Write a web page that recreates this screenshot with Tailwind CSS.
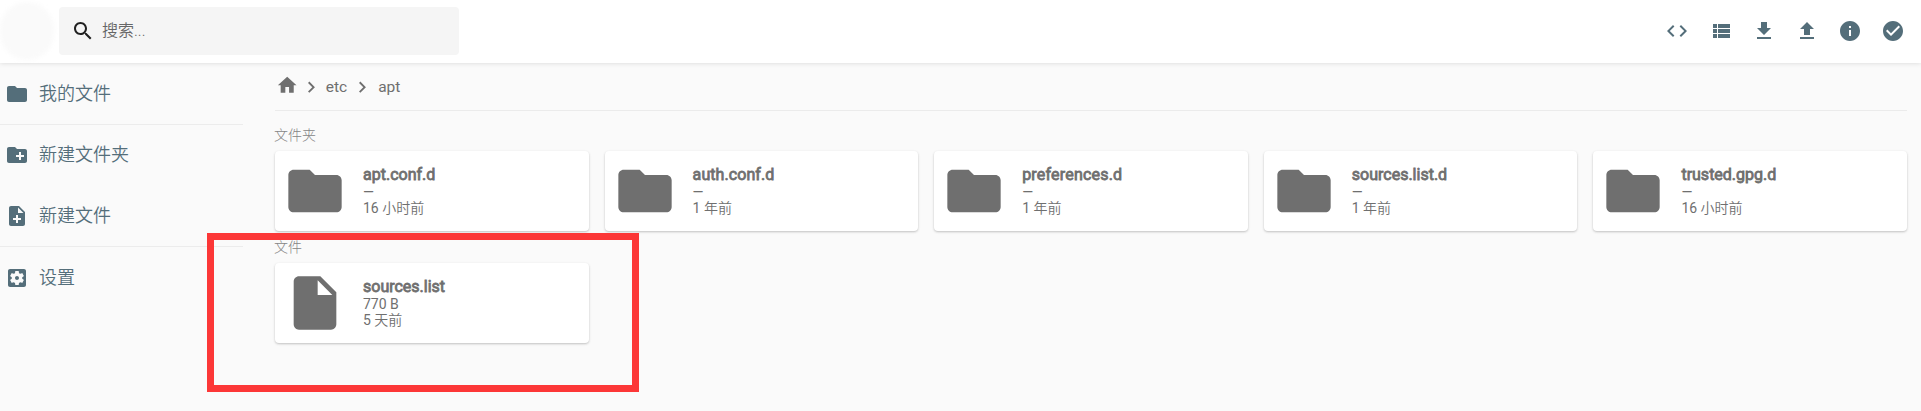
<!DOCTYPE html>
<html lang="zh-CN">
<head>
<meta charset="utf-8">
<title>apt</title>
<script src="https://cdn.jsdelivr.net/npm/@tailwindcss/browser@4"></script>
</head>
<body class="relative h-[411px] w-[1921px] overflow-hidden bg-[#fafafa] font-[Roboto,'Noto_Sans_CJK_SC',sans-serif] text-[#6f6f6f]">
<svg class="hidden">
  <symbol id="folder" viewBox="0 0 24 24"><path d="M10 4H4c-1.1 0-1.99.9-1.99 2L2 18c0 1.1.9 2 2 2h16c1.1 0 2-.9 2-2V8c0-1.1-.9-2-2-2h-8l-2-2z"/></symbol>
  <symbol id="file" viewBox="0 0 24 24"><path d="M6 2c-1.1 0-1.99.9-1.99 2L4 20c0 1.1.89 2 1.99 2H18c1.1 0 2-.9 2-2V8l-6-6H6zm7 7V3.500L18.500 9H13z"/></symbol>
  <symbol id="chevron" viewBox="0 0 24 24"><path d="M10 6L8.590 7.410 13.170 12l-4.580 4.590L10 18l6-6z"/></symbol>
</svg>

<header class="relative flex h-[63px] items-center bg-white pr-4 pb-px shadow-[0_0_5px_rgba(0,0,0,0.15)]">
  <div class="mr-[5px] h-[58px] w-[54px] rounded-full bg-[#fafafa] blur-[2px]"></div>
  <label class="flex h-12 w-[400px] items-center rounded bg-[#f5f5f5] pl-3">
    <svg class="size-6 fill-[#212121]" viewBox="0 0 24 24"><path d="M15.500 14h-.79l-.28-.27C15.410 12.590 16 11.110 16 9.500 16 5.910 13.090 3 9.500 3S3 5.910 3 9.500 5.910 16 9.500 16c1.610 0 3.090-.59 4.230-1.570l.27.28v.79l5 4.990L20.490 19l-4.990-5zm-6 0C7.010 14 5 11.990 5 9.500S7.010 5 9.500 5 14 7.010 14 9.500 11.990 14 9.500 14z"/></svg>
    <span class="ml-[7px] text-base font-[350] text-[#666]">搜索...</span>
  </label>
  <nav class="ml-auto flex gap-[19px] fill-[#546e7a]">
    <svg class="mr-px size-6" viewBox="0 0 24 24"><path d="M9.400 16.600L4.800 12l4.600-4.600L8 6l-6 6 6 6 1.400-1.400zm5.200 0l4.600-4.600-4.600-4.600L16 6l6 6-6 6-1.400-1.400z"/></svg>
    <svg class="size-6" viewBox="0 0 24 24"><path d="M4 14h4v-4H4v4zm0 5h4v-4H4v4zM4 9h4V5H4v4zm5 5h12v-4H9v4zm0 5h12v-4H9v4zM9 5v4h12V5H9z"/></svg>
    <svg class="size-6" viewBox="0 0 24 24"><path d="M19 9h-4V3H9v6H5l7 7 7-7zM5 18v2h14v-2H5z"/></svg>
    <svg class="size-6" viewBox="0 0 24 24"><path d="M9 16h6v-6h4l-7-7-7 7h4zm-4 2h14v2H5z"/></svg>
    <svg class="size-6" viewBox="0 0 24 24"><path d="M12 2C6.480 2 2 6.480 2 12s4.480 10 10 10 10-4.480 10-10S17.520 2 12 2zm1 15h-2v-6h2v6zm0-8h-2V7h2v2z"/></svg>
    <svg class="size-6" viewBox="0 0 24 24"><path d="M12 2C6.480 2 2 6.480 2 12s4.480 10 10 10 10-4.480 10-10S17.520 2 12 2zm-2 15l-5-5 1.410-1.410L10 14.170l7.590-7.590L19 8l-9 9z"/></svg>
  </nav>
</header>

<div class="flex">
  <aside class="w-[243px] shrink-0 fill-[#546e7a] text-lg font-[350] text-[#546e7a]">
    <div class="flex h-[61px] items-center gap-[10px] pl-[5px]"><svg class="size-6"><use href="#folder"/></svg><span>我的文件</span></div>
    <div class="border-y border-[#ececec]">
      <div class="flex h-[60px] items-center gap-[10px] pl-[5px]"><svg class="size-6" viewBox="0 0 24 24"><path d="M20 6h-8l-2-2H4c-1.110 0-1.990.89-1.990 2L2 18c0 1.110.89 2 2 2h16c1.110 0 2-.89 2-2V8c0-1.110-.89-2-2-2zm-1 8h-3v3h-2v-3h-3v-2h3V9h2v3h3v2z"/></svg><span>新建文件夹</span></div>
      <div class="flex h-[61px] items-center gap-[10px] pl-[5px]"><svg class="size-6" viewBox="0 0 24 24"><path d="M14 2H6c-1.100 0-1.990.9-1.990 2L4 20c0 1.100.89 2 1.990 2H18c1.100 0 2-.9 2-2V8l-6-6zm2 14h-3v3h-2v-3H8v-2h3v-3h2v3h3v2zm-3-7V3.500L18.500 9H13z"/></svg><span>新建文件</span></div>
    </div>
    <div class="flex h-[62px] items-center gap-[10px] pl-[5px]"><svg class="size-6" viewBox="0 0 24 24"><path d="M12 10c-1.100 0-2 .9-2 2s.9 2 2 2 2-.9 2-2-.9-2-2-2zm7-7H5c-1.110 0-2 .9-2 2v14c0 1.100.89 2 2 2h14c1.110 0 2-.9 2-2V5c0-1.100-.89-2-2-2zm-1.750 9c0 .23-.02.46-.05.68l1.480 1.160c.13.110.17.300.08.450l-1.400 2.420c-.09.150-.27.210-.43.150l-1.740-.7c-.36.280-.76.510-1.180.690l-.26 1.850c-.03.170-.18.300-.35.300h-2.800c-.17 0-.32-.13-.35-.29l-.26-1.850c-.43-.18-.82-.41-1.180-.69l-1.740.7c-.16.060-.34 0-.43-.15l-1.400-2.420c-.09-.15-.05-.34.080-.45l1.480-1.160c-.03-.23-.05-.46-.05-.69 0-.23.020-.46.050-.68l-1.480-1.160c-.13-.11-.17-.3-.08-.45l1.400-2.420c.09-.15.270-.21.430-.15l1.740.7c.36-.28.760-.51 1.180-.69l.26-1.850c.03-.17.180-.3.350-.3h2.800c.17 0 .32.130.35.290l.26 1.850c.43.180.82.410 1.180.690l1.740-.7c.16-.06.340 0 .43.150l1.400 2.420c.09.150.05.340-.08.450l-1.480 1.160c.03.230.05.460.05.690z"/></svg><span>设置</span></div>
  </aside>

  <main class="ml-8 w-[1632px] fill-[#6f6f6f]">
    <div class="flex h-12 items-center border-b border-[#ebebeb] text-[15.500px]">
      <svg class="mb-[3px] ml-[1px] size-[22.4px]" viewBox="0 0 24 24"><path d="M10 20v-6h4v6h5v-8h3L12 3 2 12h3v8z"/></svg>
      <svg class="mt-px ml-[2px] size-[22.4px]"><use href="#chevron"/></svg>
      <span class="mt-[3px] ml-[3px] w-[25px]">etc</span>
      <svg class="mt-px size-[22.4px]"><use href="#chevron"/></svg>
      <span class="mt-[3px] ml-[5px]">apt</span>
    </div>
    <h2 class="-ml-px mt-[14px] h-[26px] text-sm leading-5 font-light text-[#858585]">文件夹</h2>
    <div class="grid grid-cols-5 gap-4">
      <article class="flex h-20 items-center rounded bg-white pl-2 shadow-[0_1px_3px_rgba(0,0,0,0.12),0_1px_2px_rgba(0,0,0,0.12)]"><svg class="size-16"><use href="#folder"/></svg><div class="ml-4 pb-px text-sm leading-4"><p class="text-base leading-[18px] [-webkit-text-stroke:0.8px_#6f6f6f]">apt.conf.d</p><p>—</p><p><span>16</span><span class="font-[350]"> 小时前</span></p></div></article>
      <article class="flex h-20 items-center rounded bg-white pl-2 shadow-[0_1px_3px_rgba(0,0,0,0.12),0_1px_2px_rgba(0,0,0,0.12)]"><svg class="size-16"><use href="#folder"/></svg><div class="ml-4 pb-px text-sm leading-4"><p class="text-base leading-[18px] tracking-[0.08px] [-webkit-text-stroke:0.8px_#6f6f6f]">auth.conf.d</p><p>—</p><p><span>1</span><span class="font-[350]"> 年前</span></p></div></article>
      <article class="flex h-20 items-center rounded bg-white pl-2 shadow-[0_1px_3px_rgba(0,0,0,0.12),0_1px_2px_rgba(0,0,0,0.12)]"><svg class="size-16"><use href="#folder"/></svg><div class="ml-4 pb-px text-sm leading-4"><p class="text-base leading-[18px] tracking-[0.2px] [-webkit-text-stroke:0.8px_#6f6f6f]">preferences.d</p><p>—</p><p><span>1</span><span class="font-[350]"> 年前</span></p></div></article>
      <article class="flex h-20 items-center rounded bg-white pl-2 shadow-[0_1px_3px_rgba(0,0,0,0.12),0_1px_2px_rgba(0,0,0,0.12)]"><svg class="size-16"><use href="#folder"/></svg><div class="ml-4 pb-px text-sm leading-4"><p class="text-base leading-[18px] [-webkit-text-stroke:0.8px_#6f6f6f]">sources.list.d</p><p>—</p><p><span>1</span><span class="font-[350]"> 年前</span></p></div></article>
      <article class="flex h-20 items-center rounded bg-white pl-2 shadow-[0_1px_3px_rgba(0,0,0,0.12),0_1px_2px_rgba(0,0,0,0.12)]"><svg class="size-16"><use href="#folder"/></svg><div class="ml-4 pb-px text-sm leading-4"><p class="text-base leading-[18px] [-webkit-text-stroke:0.8px_#6f6f6f]">trusted.gpg.d</p><p>—</p><p><span>16</span><span class="font-[350]"> 小时前</span></p></div></article>
    </div>
    <h2 class="-ml-px mt-[6px] h-[26px] text-sm leading-5 font-light text-[#858585]">文件</h2>
    <div class="grid grid-cols-5 gap-4">
      <article class="flex h-20 items-center rounded bg-white pl-2 shadow-[0_1px_3px_rgba(0,0,0,0.12),0_1px_2px_rgba(0,0,0,0.12)]"><svg class="size-16"><use href="#file"/></svg><div class="ml-4 pb-px text-sm leading-4"><p class="text-base leading-[18px] [-webkit-text-stroke:0.8px_#6f6f6f]">sources.list</p><p>770 B</p><p><span>5</span><span class="font-[350]"> 天前</span></p></div></article>
    </div>
  </main>
</div>

<!-- highlight frame over the file list -->
<div class="absolute top-[233px] left-[207px] h-[159px] w-[432px] border-[7px] border-[#fc3737]"></div>
</body>
</html>
